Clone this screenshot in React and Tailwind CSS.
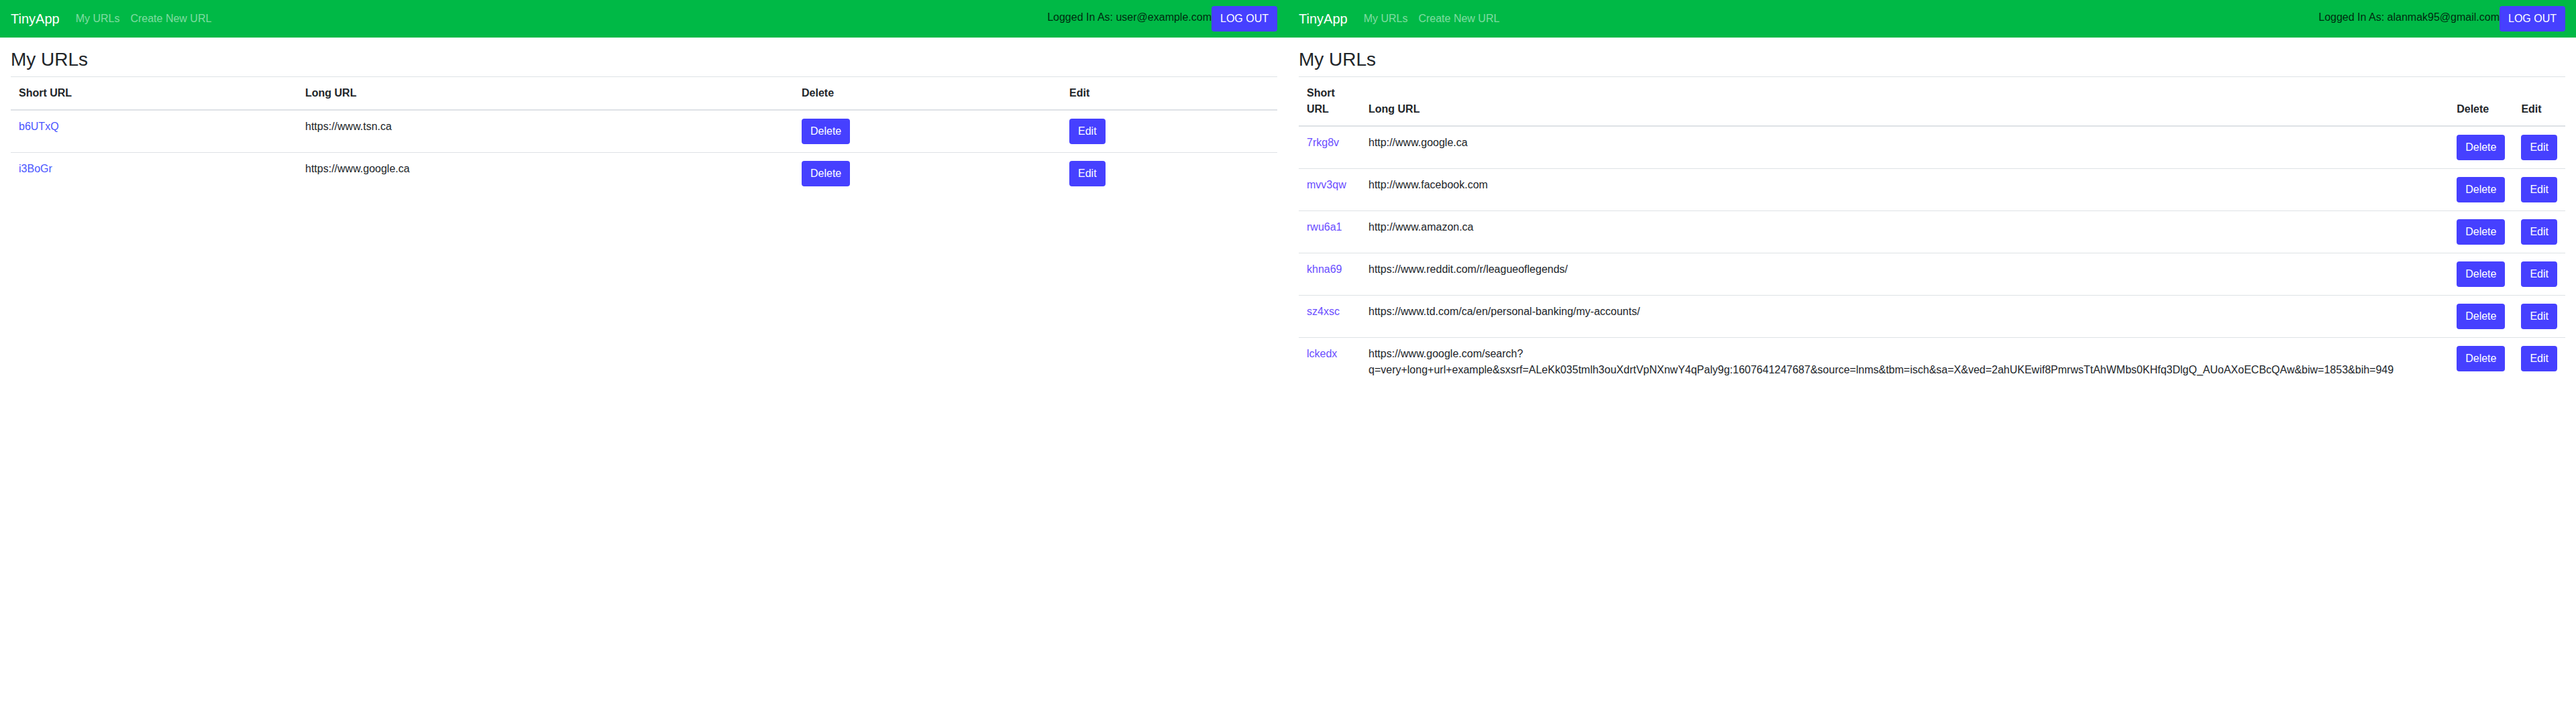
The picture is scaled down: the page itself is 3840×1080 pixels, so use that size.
import React from 'react';

const leftRows = [
	{ short: 'b6UTxQ', long: 'https://www.tsn.ca' },
	{ short: 'i3BoGr', long: 'https://www.google.ca' },
];

const rightRows = [
	{ short: '7rkg8v', long: 'http://www.google.ca' },
	{ short: 'mvv3qw', long: 'http://www.facebook.com' },
	{ short: 'rwu6a1', long: 'http://www.amazon.ca' },
	{ short: 'khna69', long: 'https://www.reddit.com/r/leagueoflegends/' },
	{ short: 'sz4xsc', long: 'https://www.td.com/ca/en/personal-banking/my-accounts/' },
	{
		short: 'lckedx',
		long: 'https://www.google.com/search?q=very+long+url+example&sxsrf=ALeKk035tmlh3ouXdrtVpNXnwY4qPaly9g:1607641247687&source=lnms&tbm=isch&sa=X&ved=2ahUKEwif8PmrwsTtAhWMbs0KHfq3DlgQ_AUoAXoECBcQAw&biw=1853&bih=949',
	},
];

// Navbar at the top of each page
const Navbar = ({ email }) => (
	<nav className="flex h-14 items-center bg-[#00b946] px-4">
		<a className="mr-4 py-[5px] text-[20px] leading-[30px] text-white">TinyApp</a>
		<a className="px-2 text-[16px] leading-6 text-white/50">My URLs</a>
		<a className="px-2 text-[16px] leading-6 text-white/50">Create New URL</a>
		<div className="ml-auto flex items-center">
			<span className="mb-[5px] text-[16px] leading-6 text-black/80">Logged In As: {email}</span>
			<button className="rounded border border-transparent bg-[#4640ff] px-3 py-1.5 text-[16px] leading-6 text-white">LOG OUT</button>
		</div>
	</nav>
);

const Btn = ({ children }) => (
	<button className="rounded border border-transparent bg-[#4640ff] px-3 py-1.5 text-[16px] leading-6 text-white">{children}</button>
);

const th = 'border-t border-b-2 border-[#dee2e6] p-3 align-bottom font-bold';
const td = 'border-t border-[#dee2e6] p-3 align-top';

const Page = ({ email, rows, linkColor, widths }) => (
	<div className="w-[1920px] shrink-0">
		<Navbar email={email} />
		<div className="px-4">
			<h1 className="mt-4 mb-2 text-[28px] leading-[1.2] font-normal text-[#212529]">My URLs</h1>
			<table className="w-full text-left text-[16px] leading-6 text-[#212529]">
				<thead>
					<tr>
						<th className={`${th} ${widths[0]}`}>Short URL</th>
						<th className={`${th} ${widths[1]}`}>Long URL</th>
						<th className={`${th} ${widths[2]}`}>Delete</th>
						<th className={th}>Edit</th>
					</tr>
				</thead>
				<tbody>
					{rows.map((row) => (
						<tr key={row.short}>
							<td className={td}>
								<a className={linkColor}>{row.short}</a>
							</td>
							<td className={td}>{row.long}</td>
							<td className={td}><Btn>Delete</Btn></td>
							<td className={td}><Btn>Edit</Btn></td>
						</tr>
					))}
				</tbody>
			</table>
		</div>
	</div>
);

export default function App() {
	return (
		<div className="flex w-[3840px] min-h-[1080px] bg-white font-['Liberation_Sans',Arial,sans-serif]">
			<Page
				email="user@example.com"
				rows={leftRows}
				linkColor="text-[#4a55ff]"
				widths={['w-[427px]', 'w-[740px]', 'w-[399px]']}
			/>
			<Page
				email="alanmak95@gmail.com"
				rows={rightRows}
				linkColor="text-[#6a4dff]"
				widths={['w-[92px]', '', '']}
			/>
		</div>
	);
}
